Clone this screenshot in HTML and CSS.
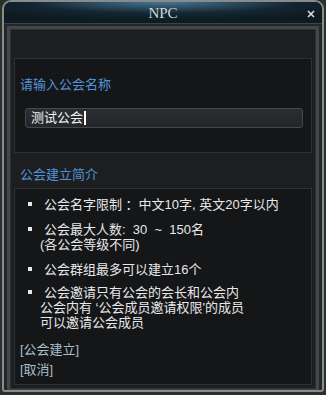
FILE: index.html
```html
<!DOCTYPE html>
<html lang="zh">
<head>
    <meta charset="UTF-8">
    <title>NPC</title>
    <link rel="stylesheet" href="styles.css">
</head>
<body>
    <div class="window">
        <div class="titlebar">
            <span class="title">NPC</span>
            <svg class="close" width="8" height="8" viewBox="0 0 8 8">
                <path d="M1 1 L7 7 M7 1 L1 7" stroke="#d8e0e4" stroke-width="1.6"/>
            </svg>
        </div>

        <div class="frame">
            <div class="box name-box">
                <div class="label">请输入公会名称</div>
                <div class="input">
                    <span>测试公会</span><span class="cursor"></span>
                </div>
            </div>

            <div class="section-title">公会建立简介</div>

            <div class="box info-box">
                <ul class="rules">
                    <li>公会名字限制 ：中文10字, 英文20字以内</li>
                    <li>公会最大人数:&nbsp;&nbsp;30&nbsp;&nbsp;~&nbsp;&nbsp;150名<br><span class="cont">(各公会等级不同)</span></li>
                    <li>公会群组最多可以建立16个</li>
                    <li class="tight">公会邀请只有公会的会长和公会内<br><span class="cont">公会内有 ‘公会成员邀请权限'的成员</span><br><span class="cont">可以邀请公会成员</span></li>
                </ul>
                <div class="links">
                    <a class="link">[公会建立]</a>
                    <a class="link">[取消]</a>
                </div>
            </div>
        </div>
    </div>
</body>
</html>
```

FILE: styles.css
```css
body {
    margin: 0;
    background: #2b3129;
    font-family: "Liberation Sans", "Noto Sans CJK SC", sans-serif;
    font-size: 13px;
}

.window {
    box-sizing: border-box;
    width: 322px;
    height: 392px;
    margin: 0 2px;
    border: 2px solid #868b8e;
    border-radius: 9px 9px 3px 3px;
    background: #24272a;
    overflow: hidden;
}

.titlebar {
    position: relative;
    height: 22px;
    box-sizing: border-box;
    border-bottom: 1px solid #33464f;
    background:
        radial-gradient(ellipse 70% 90% at 50% 0%, rgba(90, 150, 190, 0.75), rgba(40, 80, 110, 0.25) 60%, transparent 100%),
        linear-gradient(#0c161b, #0e1b21);
    text-align: center;
}

.title {
    font-family: "Liberation Serif", serif;
    font-size: 15px;
    line-height: 22px;
    color: #cdd7db;
}

.close {
    position: absolute;
    right: 7px;
    top: 8px;
}

.frame {
    margin: 2px 3px;
    border: 3px solid #43474a;
    box-shadow: inset 0 0 0 1px #2d3032;
    background: #1c1e20;
    padding: 29px 4px 4px;
}

.box {
    border: 1px solid #2e3134;
    background: #151618;
}

.name-box {
    box-sizing: content-box;
    height: 75px;
    padding-top: 18px;
}

.label,
.section-title {
    color: #5293d8;
    line-height: 16px;
    margin-left: 5px;
}

.input {
    width: 278px;
    height: 20px;
    box-sizing: border-box;
    margin: 15px 0 0 10px;
    padding-left: 5px;
    border: 1px solid #45484b;
    border-radius: 3px;
    background: linear-gradient(#2b2d30, #232528);
    color: #f2f2f2;
    line-height: 18px;
    display: flex;
    align-items: center;
}

.cursor {
    display: inline-block;
    width: 2px;
    height: 14px;
    margin-left: 1px;
    background: #ffffff;
}

.section-title {
    margin: 14px 0 5px 6px;
}

.info-box {
    padding: 8px 0 2px 5px;
}

.rules {
    list-style: none;
    margin: 0;
    padding: 0 0 0 20px;
    color: #e8e8e8;
    line-height: 15px;
}

.rules li {
    position: relative;
    margin-bottom: 10px;
    text-indent: 4px;
}

.rules li.tight {
    margin-top: -2px;
    margin-bottom: 0;
}

.rules li::before {
    content: "";
    position: absolute;
    left: -12px;
    top: 5px;
    width: 4px;
    height: 4px;
    background: #e8e8e8;
}

.cont {
    display: inline-block;
    text-indent: 0;
}

.links {
    margin-top: 12px;
}

.link {
    display: block;
    color: #a9bfc8;
    line-height: 16px;
    margin-bottom: 4px;
    cursor: pointer;
}
```
